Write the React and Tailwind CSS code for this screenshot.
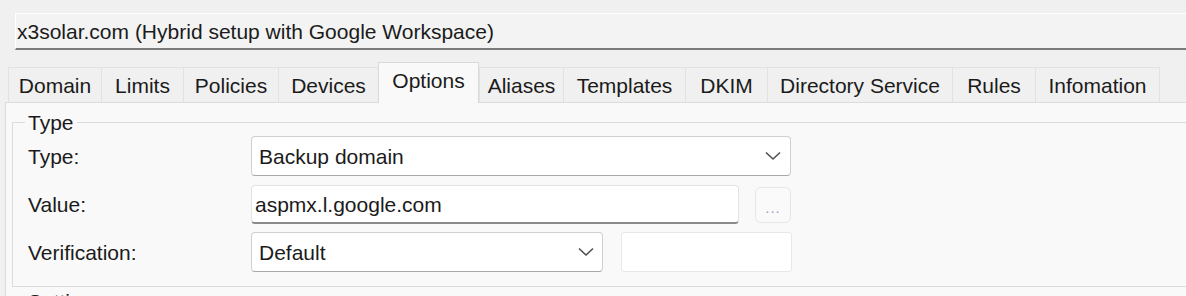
import React from "react";

function Chevron() {
  return (
    <svg width="16" height="10" viewBox="0 0 16 10" className="shrink-0">
      <path d="M1 1.5 L8 8 L15 1.5" fill="none" stroke="#505050" strokeWidth="1.6" />
    </svg>
  );
}

export default function App() {
  const tabs = [
    ["Domain", 94],
    ["Limits", 83],
    ["Policies", 96],
    ["Devices", 101],
    ["Options", 101, true],
    ["Aliases", 85],
    ["Templates", 123],
    ["DKIM", 83],
    ["Directory Service", 186],
    ["Rules", 84],
    ["Infomation", 125],
  ];
  return (
    <div className="w-[1186px] h-[296px] overflow-hidden bg-[#f0f0f0] text-[21px] leading-none text-[#1b1b1b] font-['Liberation_Sans',Arial,sans-serif]">
      <div className="ml-[15px] mt-[13px] w-[1200px] h-[37px] bg-[#f3f3f3] border-t border-l border-t-white border-l-white border-b-2 border-b-[#7a7a7a] flex items-center pl-px">
        x3solar.com (Hybrid setup with Google Workspace)
      </div>
      <div className="ml-[8px] mt-[12px] flex items-end h-[40px]">
        {tabs.map(([label, w, sel]) =>
          sel ? (
            <div
              key={label}
              style={{ width: w }}
              className="h-[41px] -mb-px relative z-10 bg-[#f9f9f9] border-l border-t border-r border-[#d9d9d9] flex items-center justify-center pb-[5px] shrink-0"
            >
              {label}
            </div>
          ) : (
            <div
              key={label}
              style={{ width: w }}
              className="h-[35px] bg-[#f0f0f0] border-t border-r border-l border-[#e2e2e2] -mr-px flex items-center justify-center shrink-0"
            >
              {label}
            </div>
          )
        )}
      </div>
      <div className="ml-[5px] w-[1200px] h-[300px] bg-[#f9f9f9] border-l border-t border-[#dcdcdc] pl-[6px] pt-[9px]">
        <fieldset className="border border-[#dcdcdc] pt-[3px] pb-[14px]">
          <legend className="ml-[12px] px-[3px] h-[21px] leading-[21px]">Type</legend>
          <div className="flex items-center h-[40px] pl-[15px]">
            <div className="w-[223px] shrink-0">Type:</div>
            <div className="w-[540px] h-[40px] bg-white border border-[#d0d0d0] border-b-[#a9a9a9] rounded-[4px] flex items-center justify-between pl-[7px] pr-[9px]">
              <span>Backup domain</span>
              <Chevron />
            </div>
          </div>
          <div className="flex items-center h-[39px] mt-[9px] pl-[15px]">
            <div className="w-[223px] shrink-0">Value:</div>
            <div className="w-[488px] h-[39px] bg-white border border-[#e3e3e3] border-b-2 border-b-[#8a8a8a] rounded-[4px] flex items-center pl-[3px]">
              aspmx.l.google.com
            </div>
            <div className="ml-[16px] w-[36px] h-[36px] bg-[#fafafa] border border-[#e6e6e6] rounded-[6px] flex items-end justify-center pb-[7px] text-[15px] text-[#9ea0c4] tracking-[1px]">
              ...
            </div>
          </div>
          <div className="flex items-center h-[40px] mt-[8px] pl-[15px]">
            <div className="w-[223px] shrink-0">Verification:</div>
            <div className="w-[352px] h-[40px] bg-white border border-[#d0d0d0] border-b-[#a9a9a9] rounded-[4px] flex items-center justify-between pl-[7px] pr-[8px]">
              <span>Default</span>
              <Chevron />
            </div>
            <div className="ml-[18px] w-[171px] h-[40px] bg-white border border-[#e8e8e8] rounded-[3px]"></div>
          </div>
        </fieldset>
        <fieldset className="mt-[4px] border border-[#dcdcdc] h-[60px]">
          <legend className="ml-[12px] px-[3px] h-[21px] leading-[21px]">Settings</legend>
        </fieldset>
      </div>
    </div>
  );
}
